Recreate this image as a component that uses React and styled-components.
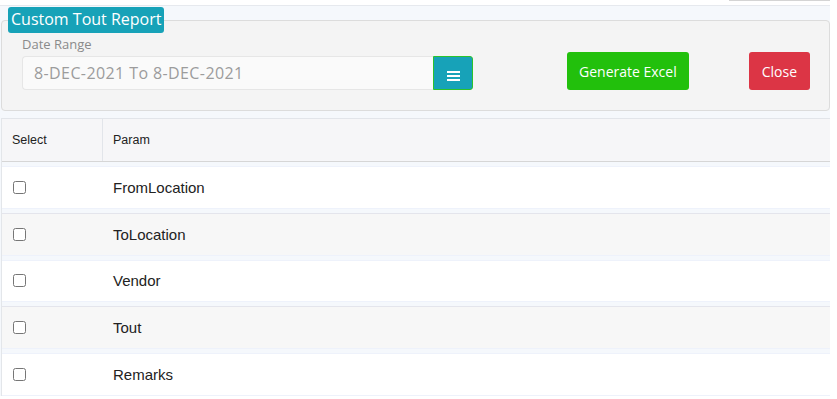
import React from 'react';
import styled, { createGlobalStyle } from 'styled-components';

const GlobalStyle = createGlobalStyle`
  *, *::before, *::after {
    box-sizing: border-box;
  }
  body {
    margin: 0;
    background: #fff;
  }
`;

const Page = styled.div`
  width: 830px;
  background: #f5f8fc;
  font-family: 'Liberation Sans', Arial, sans-serif;
`;

const TopBar = styled.div`
  height: 6px;
  background: #fff;
  border-bottom: 1px solid #e6e9ee;
  display: flex;
  justify-content: flex-end;
`;

const TopTab = styled.div`
  width: 101px;
  height: 0;
  border-top: 1px solid #d4d4d4;
`;

const Panel = styled.fieldset`
  margin: 1px 0 0 1px;
  padding: 0 0 20px 6px;
  background: #f4f4f4;
  border: 1px solid #dcdcdc;
  border-radius: 4px;
  font-family: 'Open Sans', sans-serif;
`;

const Legend = styled.legend`
  padding: 1px 3px 3px;
  background: #17a2b8;
  color: #fff;
  font-size: 16px;
  line-height: 22px;
  border-radius: 3px;
`;

const PanelBody = styled.div`
  display: flex;
  align-items: flex-end;
  padding-left: 14px;
`;

const Field = styled.div`
  display: flex;
  flex-direction: column;
`;

const Label = styled.label`
  font-size: 13px;
  color: #8a8a8a;
  line-height: 16px;
  margin: 3px 0 4px;
`;

const InputGroup = styled.div`
  display: flex;
  height: 34px;
`;

const DateInput = styled.div`
  width: 411px;
  padding-left: 11px;
  background: #fafafa;
  border: 1px solid #e6e6e6;
  border-right: none;
  border-radius: 4px 0 0 4px;
  color: #9c9c9c;
  font-size: 16px;
  letter-spacing: 0.4px;
  display: flex;
  align-items: center;
`;

const IconButton = styled.button`
  width: 40px;
  height: 34px;
  padding: 0;
  background: #17a2b8;
  border: 1px solid #2cc22c;
  border-radius: 0 3px 3px 0;
  display: flex;
  align-items: center;
  justify-content: center;
  svg {
    margin-top: 6px;
  }
`;

const ActionButton = styled.button`
  height: 38px;
  padding: 0 ${(p) => p.$pad}px;
  margin-left: ${(p) => p.$gap}px;
  background: ${(p) => p.$bg};
  border: none;
  border-radius: 3px;
  color: #fff;
  font-family: 'Open Sans', sans-serif;
  font-size: 14px;
`;

const Table = styled.div`
  margin: 7px 0 0 1px;
  border-left: 1px solid #e3e6ea;
`;

const HeadRow = styled.div`
  display: flex;
  height: 44px;
  background: #f6f6f8;
  border-top: 1px solid #e2e5ea;
  border-bottom: 1px solid #d6d6d6;
  font-size: 12.5px;
  color: #222;
`;

const HeadCell = styled.div`
  display: flex;
  align-items: center;
  width: ${(p) => (p.$w ? `${p.$w}px` : 'auto')};
  flex: ${(p) => (p.$w ? 'none' : 1)};
  padding-left: 10px;
  border-right: ${(p) => (p.$w ? '1px solid #e2e5ea' : 'none')};
`;

const Body = styled.div`
  display: flex;
  flex-direction: column;
  gap: 4px;
  padding-top: 4px;
`;

const Row = styled.div`
  display: flex;
  align-items: center;
  height: 42.75px;
  background: ${(p) => (p.$alt ? '#f7f7f7' : '#fff')};
  border-top: 1px solid ${(p) => (p.$alt ? '#e4e5ec' : '#eef2fb')};
  border-bottom: 1px solid #eef2fb;
  font-size: 15px;
  color: #222;
`;

const CheckCell = styled.div`
  width: 101px;
  padding-left: 11px;
  display: flex;
  align-items: center;
  input {
    margin: 0;
    width: 13px;
    height: 13px;
  }
`;

const ParamCell = styled.div`
  padding-left: 10px;
`;

const params = ['FromLocation', 'ToLocation', 'Vendor', 'Tout', 'Remarks'];

export default function App() {
  return (
    <>
      <GlobalStyle />
      <Page>
        <TopBar>
          <TopTab />
        </TopBar>
        <Panel>
          <Legend>Custom Tout Report</Legend>
          <PanelBody>
            <Field>
              <Label>Date Range</Label>
              <InputGroup>
                <DateInput>8-DEC-2021 To 8-DEC-2021</DateInput>
                <IconButton>
                  <svg width="13" height="10" viewBox="0 0 13 10">
                    <rect x="0" y="0" width="13" height="2" fill="#fff" />
                    <rect x="0" y="4" width="13" height="2" fill="#fff" />
                    <rect x="0" y="8" width="13" height="2" fill="#fff" />
                  </svg>
                </IconButton>
              </InputGroup>
            </Field>
            <ActionButton $bg="#22c00c" $gap={94} $pad={12}>
              Generate Excel
            </ActionButton>
            <ActionButton $bg="#dc3545" $gap={60} $pad={13}>
              Close
            </ActionButton>
          </PanelBody>
        </Panel>
        <Table>
          <HeadRow>
            <HeadCell $w={101}>Select</HeadCell>
            <HeadCell>Param</HeadCell>
          </HeadRow>
          <Body>
            {params.map((p, i) => (
              <Row key={p} $alt={i % 2 === 1}>
                <CheckCell>
                  <input type="checkbox" />
                </CheckCell>
                <ParamCell>{p}</ParamCell>
              </Row>
            ))}
          </Body>
        </Table>
      </Page>
    </>
  );
}
